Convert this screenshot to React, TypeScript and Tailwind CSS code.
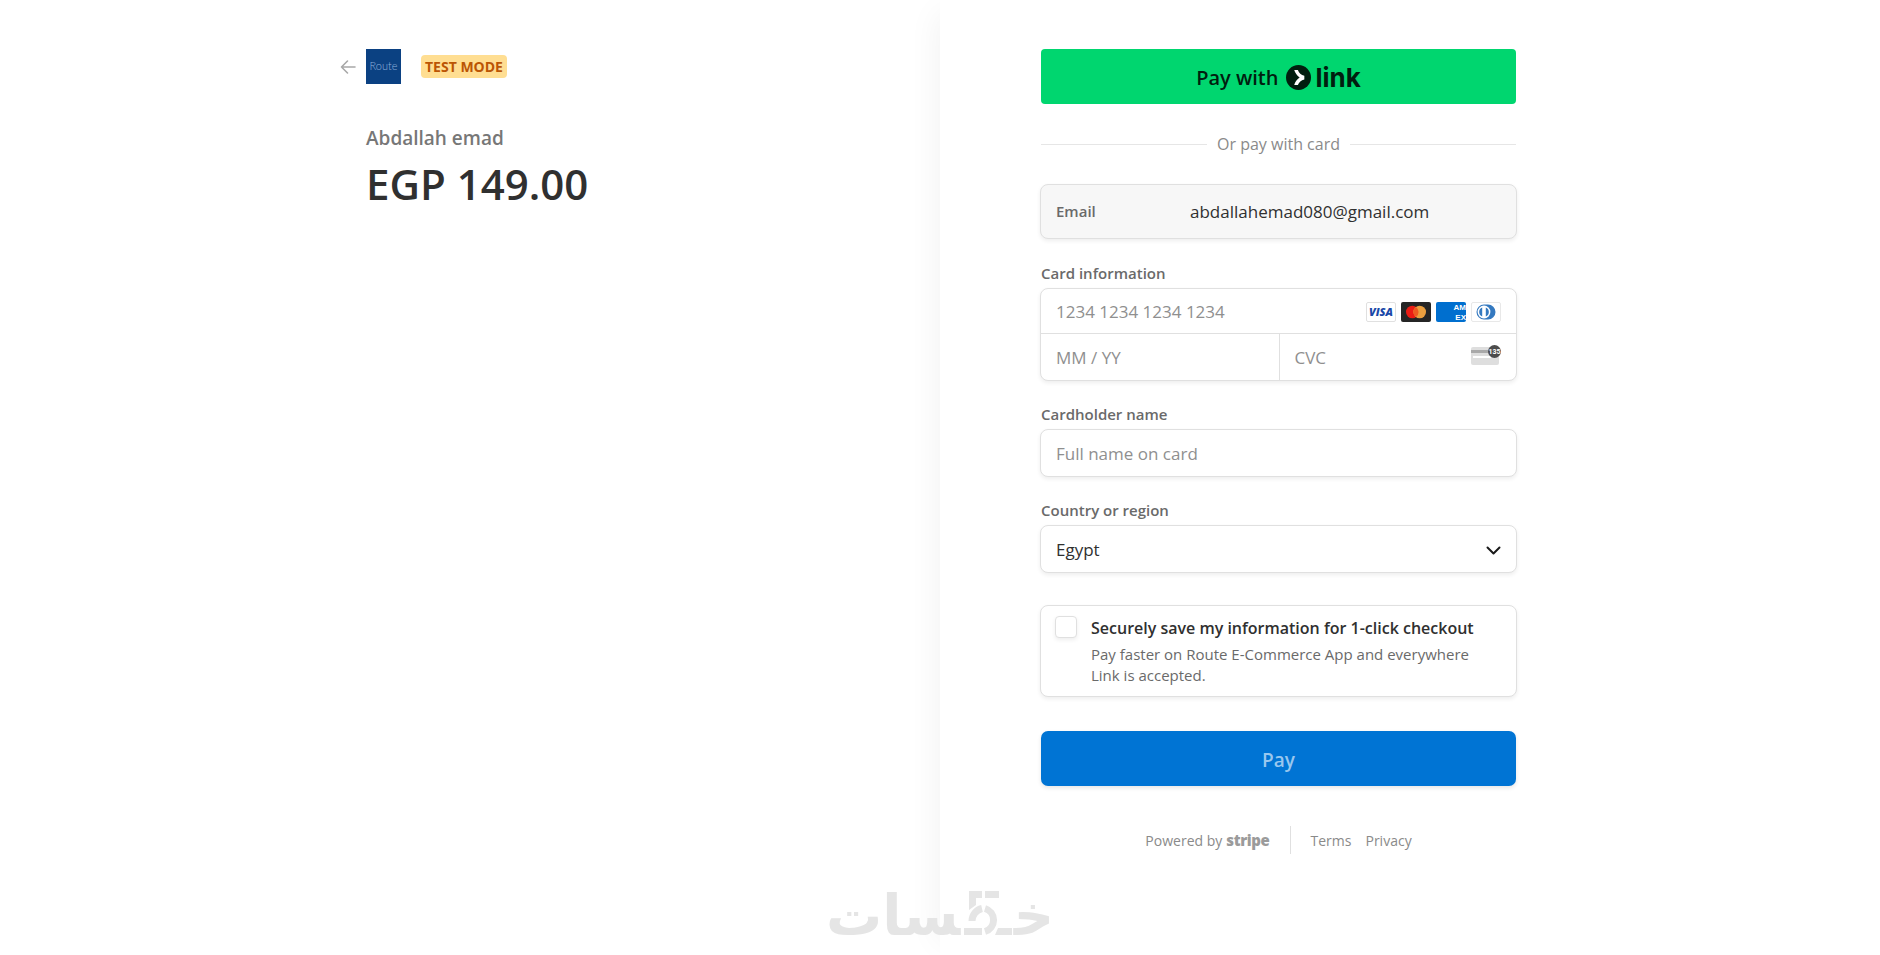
import { useState } from "react";
import type { ReactNode } from "react";

const fieldBox =
  "rounded-lg border border-[#e0e0e0] bg-white shadow-[0_2px_4px_rgba(0,0,0,0.07)]";
const inputClass =
  "w-full min-w-0 bg-transparent px-[15px] pt-0.5 text-[17px] text-[#303030] outline-none placeholder:text-[#8f8f8f]";

function BackArrow() {
  return (
    <svg width="16" height="16" viewBox="0 0 16 16" fill="none" aria-hidden="true">
      <path
        d="M7.5 2 1.5 8l6 6M1.5 8H15"
        stroke="#a8a8a8"
        strokeWidth="1.6"
        strokeLinecap="round"
        strokeLinejoin="round"
      />
    </svg>
  );
}

function LinkMark() {
  return (
    <svg width="25" height="25" viewBox="0 0 24 24" aria-hidden="true">
      <circle cx="12" cy="12" r="12" fill="#011e0f" />
      <path
        d="M11.4 4.8H7.9c.7 2.8 2.7 5.3 5.2 7.2-2.5 1.9-4.5 4.3-5.2 7.2h3.5c.9-2.6 3.2-4.9 6.2-5.4v-3.6c-3-.5-5.3-2.8-6.2-5.4z"
        fill="#fff"
      />
    </svg>
  );
}

function VisaIcon() {
  return (
    <svg width="30" height="20" viewBox="0 0 30 20" role="img" aria-label="Visa">
      <rect x="0.5" y="0.5" width="29" height="19" rx="1.5" fill="#fff" stroke="#e0e0e0" />
      <text
        x="15"
        y="14"
        textAnchor="middle"
        fontFamily="Open Sans, sans-serif"
        fontSize="11"
        fontWeight="800"
        fontStyle="italic"
        fill="#1a48a8"
      >
        VISA
      </text>
    </svg>
  );
}

function MastercardIcon() {
  return (
    <svg width="30" height="20" viewBox="0 0 30 20" role="img" aria-label="Mastercard">
      <rect width="30" height="20" rx="2" fill="#252525" />
      <circle cx="11.3" cy="10" r="6.3" fill="#eb1c14" />
      <circle cx="18.7" cy="10" r="6.3" fill="#eb9f3f" />
      <path d="M15 4.9a6.3 6.3 0 0 1 0 10.2 6.3 6.3 0 0 1 0-10.2z" fill="#ee5a20" />
    </svg>
  );
}

function AmexIcon() {
  return (
    <svg width="30" height="20" viewBox="0 0 30 20" role="img" aria-label="American Express">
      <rect width="30" height="20" rx="2" fill="#006fcf" />
      <g fontFamily="Liberation Sans, sans-serif" fontSize="8" fontWeight="700" fill="#fff" textAnchor="end">
        <text x="30" y="8">AM</text>
        <text x="30" y="18">EX</text>
      </g>
    </svg>
  );
}

function DinersIcon() {
  return (
    <svg width="30" height="20" viewBox="0 0 30 20" role="img" aria-label="Diners Club">
      <rect x="0.5" y="0.5" width="29" height="19" rx="1.5" fill="#fff" stroke="#e8e8e8" />
      <path d="M13 2.5h4a7.5 7.5 0 0 1 0 15h-4a7.5 7.5 0 0 1 0-15z" fill="#3479c0" />
      <circle cx="13" cy="10" r="6.4" fill="#fff" />
      <path d="M11.2 5.4a5 5 0 0 0 0 9.2zM14.8 5.4a5 5 0 0 1 0 9.2z" fill="#3479c0" />
    </svg>
  );
}

function CvcIcon() {
  return (
    <svg width="30" height="20" viewBox="0 0 30 20" aria-hidden="true">
      <rect y="2" width="28" height="18" rx="2" fill="#dedede" />
      <rect y="5" width="28" height="3" fill="#a9a9a9" />
      <rect x="2" y="11" width="18" height="2" fill="#fff" />
      <circle cx="23.5" cy="6.5" r="6.5" fill="#4c4c4c" />
      <text
        x="23.5"
        y="9"
        textAnchor="middle"
        fontFamily="Roboto, sans-serif"
        fontSize="7"
        fontWeight="700"
        fill="#fff"
      >
        135
      </text>
    </svg>
  );
}

function Watermark() {
  return (
    <svg width="228" height="64" viewBox="0 0 228 64" role="img" aria-label="خمسات">
      <g
        fill="#e5e5e5"
        fontFamily="DejaVu Sans, sans-serif"
        fontSize="56"
        fontWeight="700"
        direction="rtl"
      >
        <text x="228" y="52">
          {"خ\u200D"}
        </text>
        <text x="0" y="52" textAnchor="end">
          {"\u200Dسات"}
        </text>
      </g>
      <path d="M143 8h13v7h-6v7l-7 5zM159 8h14v7h-14z" fill="#e5e5e5" />
      <path
        d="M146 38a13 13 0 0 1 10-12.5M159 25.5a12 12 0 0 1 0 23"
        fill="none"
        stroke="#e5e5e5"
        strokeWidth="7"
      />
      <path d="M138 45h18v7h-18zM172 45h14v7h-17z" fill="#e5e5e5" />
    </svg>
  );
}

function Field({ id, label, children }: { id: string; label: string; children: ReactNode }) {
  return (
    <div>
      <label htmlFor={id} className="mb-[5px] block px-px text-[15px] font-semibold leading-5 text-[#6a6a6a]">
        {label}
      </label>
      {children}
    </div>
  );
}

function Summary() {
  return (
    <section className="flex justify-end pr-[99px] pt-[49px]">
      <div className="w-full max-w-[475px]">
        <header className="-ml-[26px] flex items-center">
          <a href="#back" aria-label="Back" className="mr-[10px]">
            <BackArrow />
          </a>
          <div className="flex size-[35px] items-center justify-center bg-[#0b4182] font-['Lato'] text-[11px] font-light text-[#8fb0dc]">
            Route
          </div>
          <span className="ml-5 flex h-[23px] items-center rounded bg-[#ffde92] px-1 text-sm font-bold text-[#bb5504]">
            TEST MODE
          </span>
        </header>

        <h1 className="mt-10 text-[19px] font-semibold leading-7 text-[#777777]">Abdallah emad</h1>
        <p className="mt-0.5 text-[42px] font-semibold leading-[60px] text-[#303030]">EGP 149.00</p>
      </div>
    </section>
  );
}

function PaymentForm() {
  const [cardNumber, setCardNumber] = useState("");
  const [expiry, setExpiry] = useState("");
  const [cvc, setCvc] = useState("");
  const [name, setName] = useState("");
  const [country, setCountry] = useState("EG");
  const [saveInfo, setSaveInfo] = useState(false);

  return (
    <section className="bg-white pl-[100px] pt-[49px] shadow-[-15px_0_30px_-12px_rgba(0,0,0,0.05)]">
      <form className="w-full max-w-[477px]" onSubmit={(e) => e.preventDefault()}>
        <div className="px-px">
          <button
            type="button"
            className="flex h-[55px] w-full items-center justify-center rounded bg-[#00d66f] pt-0.5 text-[#011e0f]"
          >
            <span className="mr-2 text-xl font-semibold">Pay with</span>
            <LinkMark />
            <span className="ml-1 font-['Inter'] text-[26px] font-bold">link</span>
          </button>

          <div className="mt-[27px] flex items-center gap-[10px]">
            <span className="h-px flex-1 bg-[#e6e6e6]" />
            <span className="text-base leading-[27px] text-[#8a8a8a]">Or pay with card</span>
            <span className="h-px flex-1 bg-[#e6e6e6]" />
          </div>
        </div>

        <div className="mt-[26px] flex h-[55px] items-center rounded-lg border border-[#e0e0e0] bg-[#f7f7f7] px-[15px] shadow-[0_2px_4px_rgba(0,0,0,0.07)]">
          <span className="w-[134px] text-[15px] font-semibold text-[#6a6a6a]">Email</span>
          <span className="text-[17px] text-[#303030]">abdallahemad080@gmail.com</span>
        </div>

        <div className="mt-6">
          <Field id="card-number" label="Card information">
            <div className={fieldBox}>
              <div className="flex h-[45px] items-center border-b border-[#e0e0e0] pr-[15px]">
                <input
                  id="card-number"
                  value={cardNumber}
                  onChange={(e) => setCardNumber(e.target.value)}
                  placeholder="1234 1234 1234 1234"
                  className={inputClass}
                />
                <div className="flex shrink-0 gap-[5px] pt-0.5">
                  <VisaIcon />
                  <MastercardIcon />
                  <AmexIcon />
                  <DinersIcon />
                </div>
              </div>
              <div className="grid h-[46px] grid-cols-2">
                <input
                  aria-label="Expiration"
                  value={expiry}
                  onChange={(e) => setExpiry(e.target.value)}
                  placeholder="MM / YY"
                  className={inputClass}
                />
                <div className="flex items-center border-l border-[#e0e0e0] pr-[15px]">
                  <input
                    aria-label="CVC"
                    value={cvc}
                    onChange={(e) => setCvc(e.target.value)}
                    placeholder="CVC"
                    className={inputClass}
                  />
                  <span className="mb-1 shrink-0">
                    <CvcIcon />
                  </span>
                </div>
              </div>
            </div>
          </Field>
        </div>

        <div className="mt-[23px]">
          <Field id="name" label="Cardholder name">
            <div className={`flex h-12 ${fieldBox}`}>
              <input
                id="name"
                value={name}
                onChange={(e) => setName(e.target.value)}
                placeholder="Full name on card"
                className={inputClass}
              />
            </div>
          </Field>
        </div>

        <div className="mt-[23px]">
          <Field id="country" label="Country or region">
            <div className={`relative flex h-12 ${fieldBox}`}>
              <select
                id="country"
                value={country}
                onChange={(e) => setCountry(e.target.value)}
                className={`appearance-none ${inputClass}`}
              >
                <option value="EG">Egypt</option>
              </select>
              <svg
                className="pointer-events-none absolute right-[15px] top-5"
                width="15"
                height="9"
                viewBox="0 0 15 9"
                fill="none"
                aria-hidden="true"
              >
                <path
                  d="m1.5 1.5 6 6 6-6"
                  stroke="#1a1a1a"
                  strokeWidth="2"
                  strokeLinecap="round"
                  strokeLinejoin="round"
                />
              </svg>
            </div>
          </Field>
        </div>

        <label htmlFor="save-info" className={`mt-8 flex gap-[14px] px-[14px] py-[10px] ${fieldBox}`}>
          <input
            id="save-info"
            type="checkbox"
            checked={saveInfo}
            onChange={(e) => setSaveInfo(e.target.checked)}
            className="size-[22px] shrink-0 appearance-none rounded border border-[#e0e0e0] bg-white shadow-[0_2px_4px_rgba(0,0,0,0.07)] checked:bg-[#0074d4]"
          />
          <span className="pr-4">
            <span className="block text-base font-semibold leading-6 text-[#303030]">
              Securely save my information for 1-click checkout
            </span>
            <span className="mt-1 block text-[15px] leading-[21px] text-[#6a6a6a]">
              Pay faster on Route E-Commerce App and everywhere Link is accepted.
            </span>
          </span>
        </label>

        <div className="mt-[34px] px-px">
          <button
            type="submit"
            className="h-[55px] w-full rounded-[7px] bg-[#0074d4] pt-1 text-[19px] font-semibold text-[#99c7ee] shadow-[0_2px_4px_rgba(0,0,0,0.1)]"
          >
            Pay
          </button>
        </div>

        <footer className="mt-10 flex items-center justify-center text-sm text-[#8a8a8a]">
          <a href="#stripe" className="flex h-7 items-center gap-1 border-r border-[#e0e0e0] pr-5 pt-0.5">
            Powered by
            <span className="text-[15px] font-extrabold tracking-tight text-[#9b9b9b]">stripe</span>
          </a>
          <a href="#terms" className="ml-5 pt-0.5">
            Terms
          </a>
          <a href="#privacy" className="ml-[14px] pt-0.5">
            Privacy
          </a>
        </footer>
      </form>
    </section>
  );
}

export default function App() {
  return (
    <main className="relative grid min-h-screen grid-cols-2 bg-white font-['Open_Sans',sans-serif]">
      <Summary />
      <PaymentForm />
      <div className="pointer-events-none absolute inset-x-0 bottom-2 flex justify-center">
        <Watermark />
      </div>
    </main>
  );
}
